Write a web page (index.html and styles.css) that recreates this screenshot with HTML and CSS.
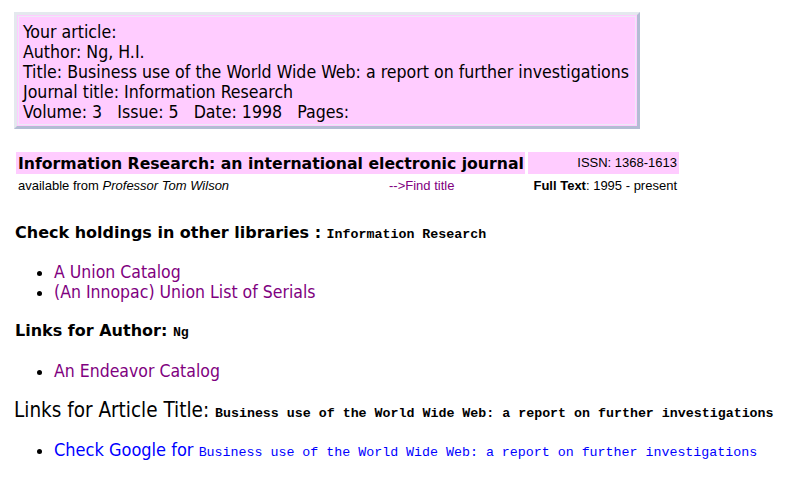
FILE: index.html
```html
<!DOCTYPE html>
<html>
<head>
<meta charset="utf-8">
<link rel="stylesheet" href="styles.css">
</head>
<body>
<div class="citation">
  <div class="citation-inner">
    <div>Your article:</div>
    <div>Author: Ng, H.I.</div>
    <div>Title: Business use of the World Wide Web: a report on further investigations</div>
    <div>Journal title: Information Research</div>
    <div>Volume: 3 &nbsp; Issue: 5 &nbsp; Date: 1998 &nbsp; Pages:</div>
  </div>
</div>

<div class="journal">
  <div class="journal-row">
    <div class="journal-title">Information Research: an international electronic journal</div>
    <div class="issn">ISSN: 1368-1613</div>
  </div>
  <div class="journal-row2">
    <div class="avail">available from <i>Professor Tom Wilson</i></div>
    <a class="find" href="#">--&gt;Find title</a>
    <div class="fulltext"><b>Full Text</b>: 1995 - present</div>
  </div>
</div>

<h3 class="sec sec-first">Check holdings in other libraries : <span class="mono">Information Research</span></h3>
<ul class="links links-first">
  <li><a href="#">A Union Catalog</a></li>
  <li><a href="#">(An Innopac) Union List of Serials</a></li>
</ul>

<h3 class="sec">Links for Author: <span class="mono">Ng</span></h3>
<ul class="links">
  <li><a href="#">An Endeavor Catalog</a></li>
</ul>

<h3 class="sec sec-narrow">Links for Article Title: <span class="mono">Business use of the World Wide Web: a report on further investigations</span></h3>
<ul class="links">
  <li><a class="google" href="#">Check Google for <span class="mono-link">Business use of the World Wide Web: a report on further investigations</span></a></li>
</ul>
</body>
</html>
```

FILE: styles.css
```css
body {
  margin: 0;
  padding: 12px 0 0 14px;
  font-family: "DejaVu Sans Condensed", "DejaVu Sans", sans-serif;
  color: #000;
  background: #fff;
}
.citation {
  width: 626px;
  box-sizing: border-box;
  border: 3px solid;
  border-color: #e4e8ee #b4bcd4 #b4bcd4 #e4e8ee;
  background: #ffccff;
  padding: 1px;
}
.citation-inner {
  border: 1px solid #eceaf6;
  padding: 5px 4px 2px 4px;
  font-size: 17.6px;
  line-height: 20px;
  white-space: nowrap;
}
.journal {
  margin-top: 23px;
  margin-left: 2px;
  width: 663px;
}
.journal-row {
  display: flex;
  gap: 3px;
}
.journal-title {
  background: #ffccff;
  font-family: "DejaVu Sans", sans-serif;
  font-weight: bold;
  font-size: 15.7px;
  line-height: 22px;
  padding: 1px 1px 0 2px;
  height: 22px;
  box-sizing: border-box;
  white-space: nowrap;
}
.issn {
  flex: 1;
  background: #ffccff;
  text-align: right;
  font-family: "Liberation Sans", Arial, sans-serif;
  font-size: 13px;
  line-height: 22px;
  padding-right: 2px;
}
.journal-row2 {
  display: flex;
  align-items: center;
  font-family: "Liberation Sans", Arial, sans-serif;
  font-size: 13px;
  line-height: 22px;
  padding: 1px 2px 0;
}
.avail { width: 371px; }
.find { color: #800080; text-decoration: none; }
.fulltext { margin-left: auto; }
.sec {
  margin: 19px 0 0 1px;
  font-family: "DejaVu Sans", sans-serif;
  font-weight: bold;
  font-size: 16px;
  line-height: 20px;
  white-space: nowrap;
}
.sec-first { margin-top: 26px; }
.sec-narrow {
  font-family: "DejaVu Sans Condensed", "DejaVu Sans", sans-serif;
  font-weight: normal;
  font-size: 20.5px;
  margin-left: 0;
}
.mono {
  font-family: "Liberation Mono", "DejaVu Sans Mono", monospace;
  font-weight: bold;
  font-size: 13.3px;
  line-height: 1;
}
.links {
  margin: 20px 0 0 0;
  padding-left: 40px;
  font-size: 17.5px;
  line-height: 20px;
}
.links-first { margin-top: 19px; }
.links a {
  color: #800080;
  text-decoration: none;
}
.links a.google {
  color: #0000ff;
  font-size: 18px;
  line-height: 1;
  white-space: nowrap;
}
.mono-link {
  font-family: "Liberation Mono", "DejaVu Sans Mono", monospace;
  font-size: 13.3px;
  line-height: 1;
}
```
